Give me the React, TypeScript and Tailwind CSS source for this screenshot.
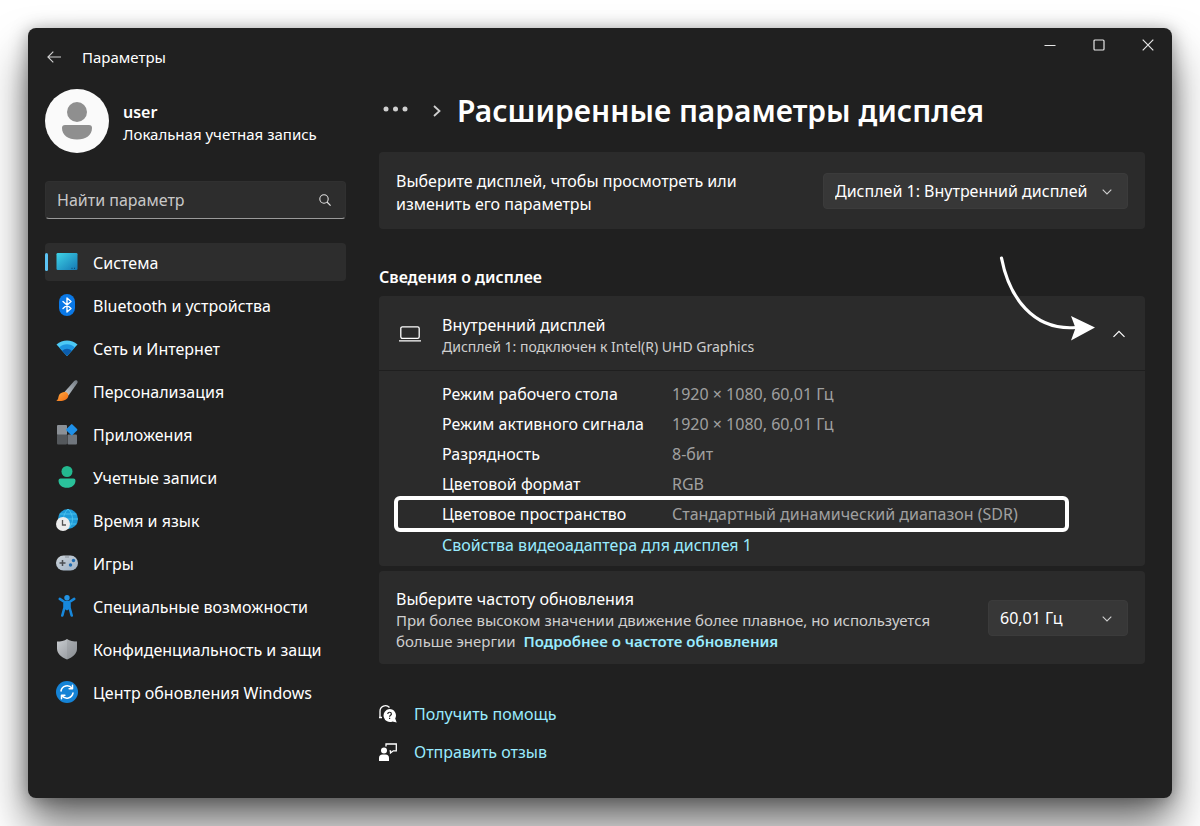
import React, { useState } from 'react';

interface NavItem {
  id: string;
  label: string;
  icon: React.ReactNode;
}

interface DetailRow {
  label: string;
  value: string;
  highlighted?: boolean;
}

const SystemIcon = () => (
  <svg viewBox="0 0 22 22" className="size-[22px] shrink-0" aria-hidden="true">
    <defs>
      <linearGradient id="system" x1="0" y1="0" x2="1" y2="1">
        <stop offset="0" stopColor="#3fd3e6" />
        <stop offset="1" stopColor="#1478b4" />
      </linearGradient>
    </defs>
    <rect x="0.5" y="2" width="21" height="17" rx="1.2" fill="url(#system)" />
    <path d="M15.5 17.3h1M18 17.3h1" stroke="#0b3f66" strokeWidth="1" />
  </svg>
);

const BluetoothIcon = () => (
  <svg viewBox="0 0 22 22" className="size-[22px] shrink-0" aria-hidden="true">
    <rect x="3" y="0" width="16" height="22" rx="8" fill="#0a78e6" />
    <path d="M7 7.5l8 7-4 3.5V4l4 3.5-8 7" fill="none" stroke="#fff" strokeWidth="1.4" strokeLinejoin="round" strokeLinecap="round" />
  </svg>
);

const NetworkIcon = () => (
  <svg viewBox="0 0 22 22" className="size-[22px] shrink-0" aria-hidden="true">
    <path d="M0.5 7.5C6.5 2 15.5 2 21.5 7.5L11 19z" fill="#4cc9f5" />
    <path d="M3.2 10.4C7.5 6.2 14.5 6.2 18.8 10.4L11 19z" fill="#1d95e0" />
    <path d="M6.2 13.7C9 11 13 11 15.8 13.7L11 19z" fill="#0b5cad" />
  </svg>
);

const BrushIcon = () => (
  <svg viewBox="0 0 22 22" className="size-[22px] shrink-0" aria-hidden="true">
    <defs>
      <linearGradient id="handle" x1="1" y1="0" x2="0" y2="1">
        <stop offset="0" stopColor="#707880" />
        <stop offset="1" stopColor="#c3cad0" />
      </linearGradient>
      <linearGradient id="bristle" x1="0" y1="0" x2="1" y2="1">
        <stop offset="0" stopColor="#ffab45" />
        <stop offset="1" stopColor="#ef6a10" />
      </linearGradient>
    </defs>
    <path d="M21 0.6c1 1 0.7 2 0 3L12.5 15.5l-4-3.5L18 1.2c1-1 2-1.5 3-0.6z" fill="url(#handle)" />
    <path d="M8 12c2.5-0.5 5 1.8 4.3 4.3C11.5 20 7 21.7 0.3 20.8c2.2-1.2 1.7-2.8 2.5-5C3.5 13.5 5.5 12.3 8 12z" fill="url(#bristle)" />
  </svg>
);

const AppsIcon = () => (
  <svg viewBox="0 0 22 22" className="size-[22px] shrink-0" aria-hidden="true">
    <rect x="1" y="2" width="10" height="10" rx="1" fill="#8b9096" />
    <rect x="1" y="11.5" width="10" height="10" rx="1" fill="#54585c" />
    <rect x="11.5" y="11.5" width="9.5" height="10" rx="1" fill="#70767d" />
    <rect x="11.5" y="2.5" width="8.5" height="8.5" rx="1" fill="#1e90e8" transform="rotate(45 15.75 6.75)" />
  </svg>
);

const AccountsIcon = () => (
  <svg viewBox="0 0 22 22" className="size-[22px] shrink-0" aria-hidden="true">
    <circle cx="11" cy="5.5" r="5.5" fill="#23b98f" />
    <path d="M4.5 12.5h13a2 2 0 0 1 2 2C19.5 19 16 21.8 11 21.8S2.5 19 2.5 14.5a2 2 0 0 1 2-2z" fill="#2ac19a" />
  </svg>
);

const TimeIcon = () => (
  <svg viewBox="0 0 22 22" className="size-[22px] shrink-0" aria-hidden="true">
    <circle cx="12" cy="10" r="10" fill="#1f9bd8" />
    <path d="M2 10h20M3.5 5h17M3.5 15h17M12 0c-6 6-6 14 0 20M12 0c6 6 6 14 0 20" stroke="#4cc4ee" strokeWidth="0.9" fill="none" />
    <circle cx="7" cy="15" r="7" fill="#ececec" />
    <path d="M6.5 11v5h3.5" fill="none" stroke="#555" strokeWidth="1.3" />
  </svg>
);

const GamesIcon = () => (
  <svg viewBox="0 0 22 22" className="size-[22px] shrink-0" aria-hidden="true">
    <defs>
      <linearGradient id="pad" x1="0" y1="0" x2="1" y2="1">
        <stop offset="0" stopColor="#ccd2d8" />
        <stop offset="1" stopColor="#9eb2c6" />
      </linearGradient>
    </defs>
    <rect x="0" y="3.5" width="22" height="15" rx="7.5" fill="url(#pad)" />
    <path d="M6.5 8v6M3.5 11h6" stroke="#4a4e52" strokeWidth="1.5" />
    <path d="M9.5 5h1M11.5 5h1" stroke="#55595d" strokeWidth="1" />
    <circle cx="17.5" cy="8.5" r="1.7" fill="#1f6bb0" />
    <circle cx="14.5" cy="13" r="1.7" fill="#1f6bb0" />
  </svg>
);

const AccessibilityIcon = () => (
  <svg viewBox="0 0 22 22" className="size-[22px] shrink-0" aria-hidden="true">
    <circle cx="11" cy="2.8" r="2.7" fill="#2394e4" />
    <path d="M3.8 3.9L8.5 7h5l4.7-3.1M8.5 7v5.5L6.3 20.5M13.5 7v5.5l2.2 8" fill="none" stroke="#1788dc" strokeWidth="2.6" strokeLinecap="round" strokeLinejoin="round" />
    <path d="M8 6.5h6v7l-3 2-3-2z" fill="#1788dc" />
  </svg>
);

const ShieldIcon = () => (
  <svg viewBox="0 0 22 22" className="size-[22px] shrink-0" aria-hidden="true">
    <defs>
      <linearGradient id="shield" x1="0" y1="0" x2="1" y2="1">
        <stop offset="0" stopColor="#c9ccd0" />
        <stop offset="1" stopColor="#8d9196" />
      </linearGradient>
    </defs>
    <path d="M11 1c2.5 2 6.5 2.5 10 2.5v7c0 5-4 8.5-10 11-6-2.5-10-6-10-11v-7c3.5 0 7.5-0.5 10-2.5z" fill="url(#shield)" />
    <path d="M11 1c2.5 2 6.5 2.5 10 2.5v7c0 5-4 8.5-10 11z" fill="#7f8489" fillOpacity="0.25" />
  </svg>
);

const UpdateIcon = () => (
  <svg viewBox="0 0 22 22" className="size-[22px] shrink-0" aria-hidden="true">
    <circle cx="11" cy="11" r="11" fill="#1583d6" />
    <path d="M5 10a6.2 6.2 0 0 1 11-2.7M17 12a6.2 6.2 0 0 1-11 2.7" fill="none" stroke="#fff" strokeWidth="1.5" strokeLinecap="round" />
    <path d="M16.5 4.3v3.4h-3.4M5.5 17.7v-3.4h3.4" fill="none" stroke="#fff" strokeWidth="1.5" strokeLinecap="round" strokeLinejoin="round" />
  </svg>
);

const HelpIcon = () => (
  <svg viewBox="0 0 18 18" className="size-[18px] shrink-0" aria-hidden="true">
    <path d="M1 12.5V6.5a5.5 5.5 0 0 1 9.5-4M0 12.5h3" fill="none" stroke="#fff" strokeWidth="1.3" />
    <path d="M10.5 4a6.5 6.5 0 0 1 5.7 9.6l1.5 4-4.2-1.1A6.5 6.5 0 1 1 10.5 4z" fill="#fff" />
    <path d="M8.8 8.9c0-2.2 3.6-2.2 3.6 0 0 1.3-1.8 1.3-1.8 2.8M10.6 12.8v1.3" fill="none" stroke="#202020" strokeWidth="1.2" />
  </svg>
);

const FeedbackIcon = () => (
  <svg viewBox="0 0 18 18" className="size-[18px] shrink-0" aria-hidden="true">
    <path d="M7 3.5V1h10.3v6.8h-3L11.5 10V7.8h-1" fill="none" stroke="#fff" strokeWidth="1.3" />
    <circle cx="5" cy="7.5" r="3" fill="#fff" />
    <path d="M0 18v-3a3.5 3.5 0 0 1 3.5-3.5h3A3.5 3.5 0 0 1 10 15v3z" fill="#fff" />
  </svg>
);

const navItems: NavItem[] = [
  { id: 'system', label: 'Система', icon: <SystemIcon /> },
  { id: 'bluetooth', label: 'Bluetooth и устройства', icon: <BluetoothIcon /> },
  { id: 'network', label: 'Сеть и Интернет', icon: <NetworkIcon /> },
  { id: 'personalization', label: 'Персонализация', icon: <BrushIcon /> },
  { id: 'apps', label: 'Приложения', icon: <AppsIcon /> },
  { id: 'accounts', label: 'Учетные записи', icon: <AccountsIcon /> },
  { id: 'time', label: 'Время и язык', icon: <TimeIcon /> },
  { id: 'games', label: 'Игры', icon: <GamesIcon /> },
  { id: 'accessibility', label: 'Специальные возможности', icon: <AccessibilityIcon /> },
  { id: 'privacy', label: 'Конфиденциальность и защи', icon: <ShieldIcon /> },
  { id: 'update', label: 'Центр обновления Windows', icon: <UpdateIcon /> },
];

const details: DetailRow[] = [
  { label: 'Режим рабочего стола', value: '1920 × 1080, 60,01 Гц' },
  { label: 'Режим активного сигнала', value: '1920 × 1080, 60,01 Гц' },
  { label: 'Разрядность', value: '8-бит' },
  { label: 'Цветовой формат', value: 'RGB' },
  { label: 'Цветовое пространство', value: 'Стандартный динамический диапазон (SDR)', highlighted: true },
];

interface DropdownProps {
  id: string;
  options: string[];
  className: string;
}

function Dropdown({ id, options, className }: DropdownProps) {
  return (
    <div className={`relative shrink-0 ${className}`}>
      <select
        id={id}
        className="h-9 w-full appearance-none rounded border border-[#3b3b3b] bg-[#373737] pt-px pr-8 pl-[11px] text-base text-white outline-none"
      >
        {options.map((option) => (
          <option key={option}>{option}</option>
        ))}
      </select>
      <svg viewBox="0 0 10 6" className="pointer-events-none absolute top-4 right-4 h-[6px] w-[10px]" aria-hidden="true">
        <path d="M0.7 0.7L5 5l4.3-4.3" fill="none" stroke="#cfcfcf" strokeWidth="1.1" />
      </svg>
    </div>
  );
}

function WindowControls() {
  return (
    <div className="flex self-start">
      <button type="button" aria-label="Свернуть" className="flex h-[34px] w-[49px] items-center justify-center">
        <svg viewBox="0 0 12 12" className="size-3">
          <path d="M0.5 6.5h11" stroke="#e6e6e6" strokeWidth="1" />
        </svg>
      </button>
      <button type="button" aria-label="Развернуть" className="flex h-[34px] w-[49px] items-center justify-center">
        <svg viewBox="0 0 12 12" className="size-3">
          <rect x="1" y="1" width="10" height="10" rx="1" fill="none" stroke="#e6e6e6" strokeWidth="1.2" />
        </svg>
      </button>
      <button type="button" aria-label="Закрыть" className="flex h-[34px] w-[49px] items-center justify-center">
        <svg viewBox="0 0 12 12" className="size-3">
          <path d="M0.7 0.7l10.6 10.6M11.3 0.7L0.7 11.3" stroke="#e6e6e6" strokeWidth="1.2" />
        </svg>
      </button>
    </div>
  );
}

function Sidebar() {
  const [active, setActive] = useState('system');

  return (
    <aside className="w-[301px] shrink-0 pt-px">
      <div className="flex items-center gap-[14px]">
        <svg viewBox="0 0 64 64" className="size-16 shrink-0" aria-hidden="true">
          <circle cx="32" cy="32" r="32" fill="#fafafa" />
          <circle cx="32" cy="23" r="10" fill="#8f8f8f" />
          <path d="M20 36h24a3 3 0 0 1 3 3c0 7-6 11.5-15 11.5S17 46 17 39a3 3 0 0 1 3-3z" fill="#8f8f8f" />
        </svg>
        <div className="pt-1">
          <p className="text-base leading-[22px] font-semibold">user</p>
          <p className="text-[15px] leading-[22px]">Локальная учетная запись</p>
        </div>
      </div>

      <label className="mt-7 flex h-[38px] items-center rounded border border-[#303030] border-b-[#9a9a9a] bg-[#2d2d2d] pr-[14px] pl-[11px]">
        <input
          type="text"
          aria-label="Найти параметр"
          placeholder="Найти параметр"
          className="min-w-0 flex-1 bg-transparent text-base text-white outline-none placeholder:text-[#c8c8c8]"
        />
        <svg viewBox="0 0 12 12" className="size-3 shrink-0" aria-hidden="true">
          <circle cx="5" cy="5" r="4.2" fill="none" stroke="#e0e0e0" strokeWidth="1.1" />
          <path d="M8 8l3.6 3.6" stroke="#e0e0e0" strokeWidth="1.2" />
        </svg>
      </label>

      <nav className="mt-6 flex flex-col gap-[5px]">
        {navItems.map((item) => (
          <button
            key={item.id}
            type="button"
            onClick={() => setActive(item.id)}
            className={`relative flex h-[38px] items-center gap-[15px] rounded pl-[11px] text-left text-base whitespace-nowrap ${
              active === item.id ? 'bg-[#2d2d2d]' : ''
            }`}
          >
            {active === item.id && <span className="absolute top-[10px] left-0 h-[18px] w-[3px] rounded-full bg-[#5cc4f5]" />}
            {item.icon}
            <span className="pt-[2px]">{item.label}</span>
          </button>
        ))}
      </nav>
    </aside>
  );
}

function DisplayInfo() {
  const [open, setOpen] = useState(true);

  return (
    <section className="relative mt-[7px] rounded bg-[#2b2b2b]">
      <button
        type="button"
        aria-expanded={open}
        onClick={() => setOpen(!open)}
        className="flex h-[75px] w-full items-center border-b border-[#1f1f1f] px-5 pt-px text-left"
      >
        <svg viewBox="0 0 22 16" className="h-4 w-[22px] shrink-0" aria-hidden="true">
          <rect x="1.8" y="0.8" width="18.4" height="11.6" rx="1.6" fill="none" stroke="#fff" strokeWidth="1.3" />
          <path d="M0.5 14.8h21" stroke="#fff" strokeWidth="1.3" strokeLinecap="round" />
        </svg>
        <span className="flex-1 pt-1 pl-[21px]">
          <span className="block text-base leading-[22px]">Внутренний дисплей</span>
          <span className="block text-sm leading-[22px] text-[#cfcfcf]">Дисплей 1: подключен к Intel(R) UHD Graphics</span>
        </span>
        <svg viewBox="0 0 12 8" className="h-2 w-3 shrink-0" aria-hidden="true">
          <path d={open ? 'M0.5 6.8L6 1.3l5.5 5.5' : 'M0.5 1.3L6 6.8l5.5-5.5'} fill="none" stroke="#fff" strokeWidth="1.2" />
        </svg>
      </button>

      {/* Arrow pointing at the collapse chevron */}
      <svg viewBox="0 0 98 88" className="pointer-events-none absolute -top-[42px] right-[49px] h-[88px] w-[98px]" aria-hidden="true">
        <path d="M3.5 4C11 43 35 77 78 73.5" fill="none" stroke="#fff" strokeWidth="3.2" strokeLinecap="round" />
        <path d="M97 73.5L73 62l4.5 12L73 86.5z" fill="#fff" />
      </svg>

      {open && (
        <div className="pt-2 pb-[7px] pl-[63px]">
          <dl>
            {details.map((row) => (
              <div key={row.label} className="relative flex h-[30px] items-center">
                <dt className="w-[230px] shrink-0">{row.label}</dt>
                <dd className="text-[#a0a0a0]">{row.value}</dd>
                {row.highlighted && (
                  <span className="absolute -top-[3px] right-[76px] -bottom-[3px] -left-12 rounded-md border-4 border-white" />
                )}
              </div>
            ))}
          </dl>
          <a href="#adapter" className="flex h-[30px] items-center pt-px text-[#99ebff]">
            Свойства видеоадаптера для дисплея 1
          </a>
        </div>
      )}
    </section>
  );
}

export default function App() {
  return (
    <div className="flex min-h-screen overflow-hidden bg-white p-7 font-['Noto_Sans','Open_Sans',sans-serif] text-base text-white">
      <div className="flex flex-1 flex-col rounded-lg bg-[#202020] shadow-[0_2px_18px_rgba(0,0,0,0.35),0_28px_44px_rgba(0,0,0,0.55)]">
        <header className="flex h-[60px] items-center justify-between pl-[19px]">
          <div className="flex items-center gap-[21px] pb-[2px]">
            <button type="button" aria-label="Назад">
              <svg viewBox="0 0 14 12" className="h-3 w-[14px]">
                <path d="M14 6H1M6.3 0.6L0.9 6l5.4 5.4" fill="none" stroke="#d0d0d0" strokeWidth="1.1" />
              </svg>
            </button>
            <span className="text-[15px]">Параметры</span>
          </div>
          <WindowControls />
        </header>

        <div className="flex flex-1 gap-[33px] pr-[27px] pl-[17px]">
          <Sidebar />

          <main className="min-w-0 flex-1">
            <div className="flex h-[46px] items-center">
              <button type="button" aria-label="Показать путь" className="pb-1 pl-1">
                <svg viewBox="0 0 26 6" className="h-[6px] w-[26px]">
                  <circle cx="3" cy="3" r="2.5" fill="#d0d0d0" />
                  <circle cx="12.5" cy="3" r="2.5" fill="#d0d0d0" />
                  <circle cx="22" cy="3" r="2.5" fill="#d0d0d0" />
                </svg>
              </button>
              <svg viewBox="0 0 8 12" className="ml-6 h-3 w-2" aria-hidden="true">
                <path d="M1 1l5.5 5L1 11" fill="none" stroke="#d0d0d0" strokeWidth="1.8" />
              </svg>
              <h1 className="ml-4 text-3xl font-semibold whitespace-nowrap">Расширенные параметры дисплея</h1>
            </div>

            <section className="mt-[18px] flex h-[77px] items-center justify-between rounded bg-[#2b2b2b] px-[17px]">
              <label htmlFor="display" className="max-w-[380px] pt-1 leading-[23px]">
                Выберите дисплей, чтобы просмотреть или изменить его параметры
              </label>
              <Dropdown id="display" className="w-[305px]" options={['Дисплей 1: Внутренний дисплей']} />
            </section>

            <h2 className="mt-9 text-base font-semibold">Сведения о дисплее</h2>

            <DisplayInfo />

            <section className="mt-[5px] flex items-center justify-between rounded bg-[#2b2b2b] px-[17px] py-3">
              <div className="max-w-[550px] pt-[5px]">
                <label htmlFor="rate" className="block leading-[22px]">
                  Выберите частоту обновления
                </label>
                <p className="text-[15px] leading-[21px] text-[#cfcfcf]">
                  При более высоком значении движение более плавное, но используется больше энергии{' '}
                  <a href="#rate-info" className="ml-1 font-semibold text-[#99ebff]">
                    Подробнее о частоте обновления
                  </a>
                </p>
              </div>
              <Dropdown id="rate" className="w-[140px]" options={['60,01 Гц', '48,01 Гц']} />
            </section>

            <div className="mt-[38px] flex flex-col items-start gap-[14px]">
              <a href="#help" className="flex items-center gap-[17px] text-[#99ebff]">
                <HelpIcon />
                Получить помощь
              </a>
              <a href="#feedback" className="flex items-center gap-[17px] text-[#99ebff]">
                <FeedbackIcon />
                Отправить отзыв
              </a>
            </div>
          </main>
        </div>
      </div>
    </div>
  );
}
